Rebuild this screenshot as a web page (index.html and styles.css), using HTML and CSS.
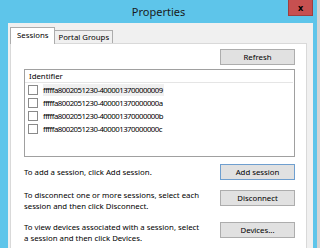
FILE: index.html
```html
<!DOCTYPE html>
<html>
<head>
  <title>Properties</title>
  <link rel="stylesheet" href="styles.css">
</head>
<body>
  <div class="window">
    <div class="titlebar">
      <span></span>
      <span class="title">Properties</span>
      <button class="close">x</button>
    </div>
    <div class="client">
      <div class="tabs">
        <div class="tab active">Sessions</div>
        <div class="tab">Portal Groups</div>
      </div>
      <div class="panel">
        <div class="top-row">
          <button class="btn">Refresh</button>
        </div>
        <div class="list">
          <div class="list-head">Identifier</div>
          <div class="item selected"><span class="cb"></span><span class="item-text">fffffa8002051230-4000013700000009</span></div>
          <div class="item"><span class="cb"></span><span class="item-text">fffffa8002051230-400001370000000a</span></div>
          <div class="item"><span class="cb"></span><span class="item-text">fffffa8002051230-400001370000000b</span></div>
          <div class="item"><span class="cb"></span><span class="item-text">fffffa8002051230-400001370000000c</span></div>
        </div>
        <div class="action center">
          <p>To add a session, click Add session.</p>
          <button class="btn default">Add session</button>
        </div>
        <div class="action">
          <p>To disconnect one or more sessions, select each session and then click Disconnect.</p>
          <button class="btn">Disconnect</button>
        </div>
        <div class="action">
          <p>To view devices associated with a session, select a session and then click Devices.</p>
          <button class="btn">Devices...</button>
        </div>
        <fieldset class="group">
          <legend>Session Information</legend>
        </fieldset>
      </div>
    </div>
  </div>
</body>
</html>
```

FILE: styles.css
```css
body {
  margin: 0;
  background-color: #d4d4d4;
  font-family: "Noto Sans", sans-serif;
  font-size: 7.8px;
  color: #000;
  overflow: hidden;
}
.window {
  width: 317px;
  height: 248px;
  overflow: hidden;
  background-color: #5ec5ea;
}
.titlebar {
  display: grid;
  grid-template-columns: 1fr auto 1fr;
  align-items: start;
  height: 23px;
}
.title {
  font-size: 11px;
  line-height: 23px;
  color: #1a1a1a;
}
.close {
  justify-self: end;
  margin-right: 4px;
  width: 25px;
  height: 16px;
  padding: 0;
  border: 1px solid #9e3f3f;
  border-top: none;
  background-color: #c75050;
  color: #000;
  font-family: "Noto Sans", sans-serif;
  font-size: 9px;
  font-weight: bold;
  line-height: 14px;
}
.client {
  margin-left: 8px;
  width: 305px;
  height: 237px;
  background-color: #f0f0f0;
  padding: 5px 0 0 2px;
  box-sizing: border-box;
}
.tabs {
  display: flex;
  align-items: flex-end;
  height: 15px;
  position: relative;
  z-index: 1;
}
.tab {
  height: 12px;
  padding: 0 3px;
  line-height: 12px;
  border: 1px solid #acacac;
  border-bottom: none;
  background-color: #f0f0f0;
  margin-left: -1px;
}
.tab:first-child {
  margin-left: 0;
}
.tab.active {
  height: 16px;
  line-height: 15px;
  padding: 0 6px;
  background-color: #fff;
  margin-bottom: -1px;
}
.panel {
  width: 297px;
  height: 210px;
  box-sizing: border-box;
  background-color: #fff;
  border: 1px solid #d9d9d9;
  padding: 5px 11px 0 13px;
}
.top-row {
  display: flex;
  justify-content: flex-end;
}
.btn {
  width: 75px;
  height: 16px;
  padding: 0;
  border: 1px solid #adadad;
  background-color: #e1e1e1;
  font-family: "Noto Sans", sans-serif;
  font-size: 7.8px;
  color: #000;
  flex-shrink: 0;
}
.btn.default {
  border-color: #6f9fcf;
}
.list {
  margin-top: 4px;
  height: 88px;
  box-sizing: border-box;
  border: 1px solid #a0a0a0;
}
.list-head {
  height: 12px;
  line-height: 12px;
  padding-left: 4px;
  border-bottom: 1px solid #e5e5e5;
  margin-right: 1px;
}
.item {
  display: flex;
  align-items: center;
  height: 13px;
  padding-left: 3px;
}
.cb {
  width: 8px;
  height: 8px;
  border: 1px solid #8a8a8a;
  background-color: #fff;
  margin-right: 5px;
}
.item-text {
  line-height: 12px;
  padding-right: 1px;
  letter-spacing: -0.5px;
}
.item.selected .item-text {
  background-color: #f0f0f0;
}
.action {
  display: flex;
  justify-content: space-between;
  align-items: flex-start;
  margin-top: 7px;
}
.action.center {
  align-items: center;
}
.action + .action {
  margin-top: 10px;
}
.action p {
  margin: 0;
  width: 180px;
  line-height: 11px;
}
.group {
  margin: 9px -7px 0 -3px;
  padding: 0;
  border: 1px solid #dcdcdc;
  height: 20px;
}
.group legend {
  margin-left: 3px;
  padding: 0 2px;
}
```
